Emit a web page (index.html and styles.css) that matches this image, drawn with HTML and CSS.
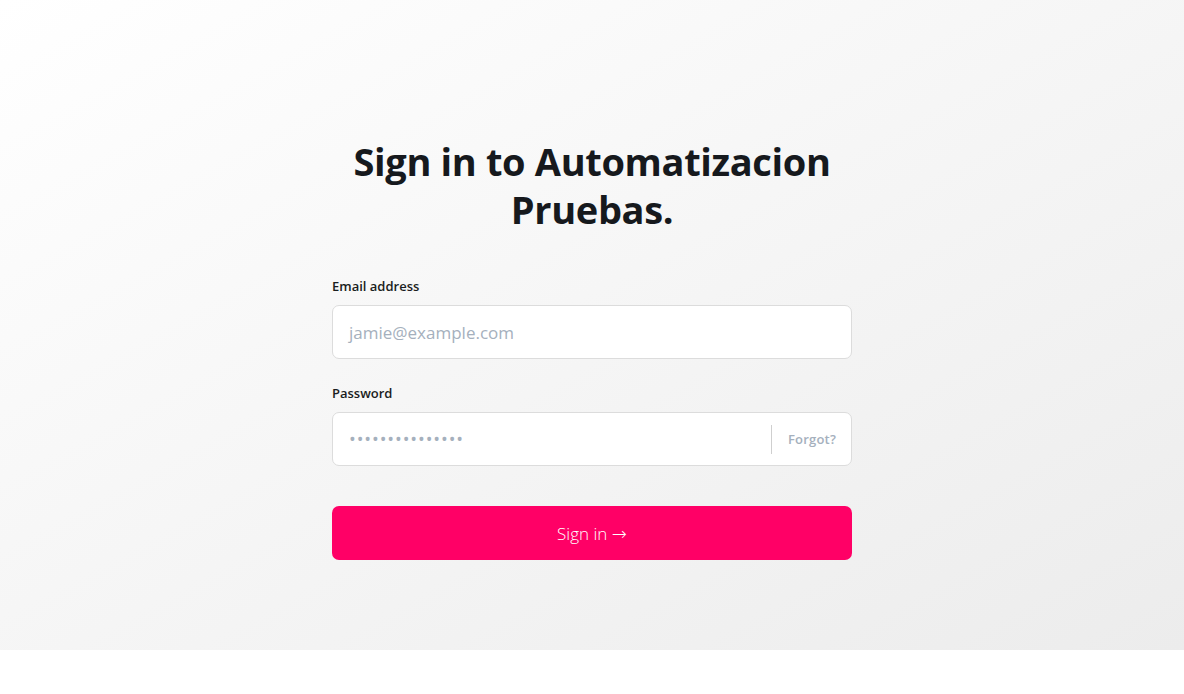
FILE: index.html
```html
<!DOCTYPE html>
<html lang="en">
<head>
<meta charset="utf-8">
<title>Sign in</title>
<link rel="stylesheet" href="styles.css">
</head>
<body>
<main class="hero">
  <form class="form">
    <h1 class="title">Sign in to Automatizacion Pruebas.</h1>
    <div class="field">
      <label class="label">Email address</label>
      <div class="box"><span class="placeholder">jamie@example.com</span></div>
    </div>
    <div class="field">
      <label class="label">Password</label>
      <div class="box">
        <span class="dots">•••••••••••••••</span>
        <span class="divider"></span>
        <span class="forgot">Forgot?</span>
      </div>
    </div>
    <button type="button" class="submit">Sign in <span class="arrow">→</span></button>
  </form>
</main>
</body>
</html>
```
FILE: styles.css
```css
* { box-sizing: border-box; }
html, body { margin: 0; padding: 0; background: #fff; }
body { font-family: "Open Sans", "Noto Sans", sans-serif; color: #16191d; }
.hero {
  height: 650px;
  background: linear-gradient(to bottom right, #ffffff, #ececec);
  display: flex;
  justify-content: center;
  padding-top: 137px;
}
.form { width: 520px; display: flex; flex-direction: column; }
.title {
  margin: 0 0 44px;
  text-align: center;
  font-size: 38px;
  line-height: 48px;
  font-weight: 700;
  letter-spacing: -0.35px;
  padding: 0 20px;
}
.field { display: flex; flex-direction: column; margin-bottom: 25px; }
.label { font-size: 13px; font-weight: 600; line-height: 18px; margin-bottom: 10px; color: #1a1d21; }
.box {
  height: 54px;
  background: #fff;
  border: 1px solid #dcdcdc;
  border-radius: 7px;
  display: flex;
  align-items: center;
  padding: 0 15px 0 16px;
}
.placeholder { font-size: 17px; color: #a5b0bd; font-weight: 400; }
.dots { flex: 1; font-size: 18px; color: #a5b0bd; letter-spacing: 0.9px; }
.divider { width: 1px; height: 29px; background: #cfcfcf; margin-right: 16px; }
.forgot { font-size: 13px; font-weight: 600; color: #a5b0bd; letter-spacing: 0.2px; }
.submit {
  margin-top: 15px;
  height: 54px;
  border: none;
  border-radius: 7px;
  background: #ff0066;
  color: #fff;
  font-family: inherit;
  font-size: 17px;
  font-weight: 300;
}
.arrow { font-family: "DejaVu Sans", sans-serif; font-size: 18px; }
```
